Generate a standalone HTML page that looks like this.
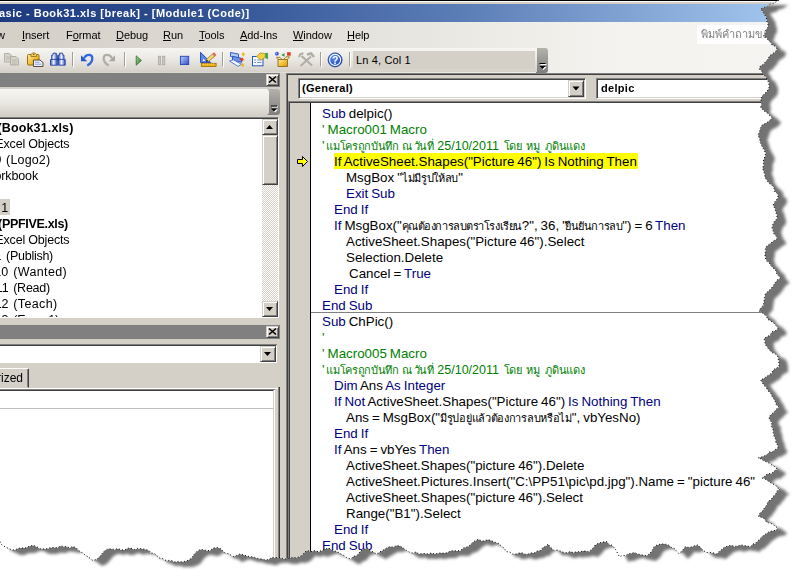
<!DOCTYPE html>
<html lang="th">
<head>
<meta charset="utf-8">
<title>Microsoft Visual Basic - Book31.xls [break] - [Module1 (Code)]</title>
<style>
html,body{margin:0;padding:0;background:#fff;}
body{width:793px;height:572px;overflow:hidden;position:relative;font-family:"Liberation Sans",sans-serif;}
#shadow{position:absolute;left:0;top:0;width:793px;height:572px;filter:drop-shadow(9px 5px 1.8px rgba(0,0,0,.55));}
#win{position:absolute;left:0;top:0;width:793px;height:572px;background:#fff;clip-path:url(#torn);overflow:hidden;}
#win div,#win span,#win svg{position:absolute;box-sizing:border-box;white-space:pre;}
#win span.i{position:static;}
.face{background:#d4d0c8;}
/* classic 3D button */
.btn{background:#d4d0c8;border:1px solid;border-color:#d4d0c8 #404040 #404040 #d4d0c8;box-shadow:inset 1px 1px 0 #fff,inset -1px -1px 0 #808080;}
.dither{background-color:#fff;background-image:conic-gradient(#fff 25%,#d4d0c8 0 50%,#fff 0 75%,#d4d0c8 0);background-size:2px 2px;}
/* title */
#title{left:0;top:4px;width:793px;height:18px;background:linear-gradient(to right,#1e3a80 0,#2a4a8e 160px,#5d7fb8 470px,#a3c6ee 780px);}
#title span{left:-1px;top:0;line-height:18px;color:#fff;font-weight:bold;font-size:11px;letter-spacing:.5px;}
/* menu */
.hgrad{background:linear-gradient(to right,#d4d0c8 0,#dedbd4 250px,#f3f2ee 600px,#f5f4f2 793px);}
#menu{left:0;top:22px;width:793px;height:26px;}
#menu span{top:0;line-height:26px;font-size:11px;color:#000;letter-spacing:-.05px;}
#menu u{text-decoration:underline;text-underline-offset:1px;}
#ask{left:697px;top:3px;width:100px;height:19px;background:#fff;}
#ask span{left:4px;top:0;line-height:19px;font-size:11px;color:#808080;}
/* toolbar */
#tb{left:0;top:48px;width:536.5px;height:24px;background:linear-gradient(to bottom,#f7f6f3 0,#e9e7e1 50%,#d5d1c9 100%);}
#tbrest{left:0;top:48px;width:793px;height:25px;}
.grip{background:linear-gradient(to bottom,#b4b2ac 0,#7e7e7e 100%);border-radius:0 3px 3px 0;}
#lncol{left:353px;top:3px;width:182px;height:18px;background:#d4d0c8;}
#lncol span{left:3px;top:0;line-height:18px;font-size:11px;letter-spacing:.15px;}
/* code */
.cl{left:322px;height:16px;line-height:16px;font-size:13.33px;color:#000;word-spacing:-.7px;}
.k{color:#000080;} .c{color:#008000;}
.tr{font-size:11px;letter-spacing:-.3px;}
.dg{font-size:12.5px;}
#L2 .c>:nth-child(2),#L16 .c>:nth-child(2){margin-left:-.9px;}
#L2 .c>:nth-child(3),#L16 .c>:nth-child(3){margin-left:-2.6px;}
#L2 .c>:nth-child(4),#L16 .c>:nth-child(4){margin-left:-.8px;}
#L2 .c>:nth-child(5),#L16 .c>:nth-child(5){margin-left:.4px;}
#L2 .c>:nth-child(7),#L16 .c>:nth-child(7){margin-left:1.5px;}
#L2,#L16{word-spacing:.6px;}
#L7 .tr{letter-spacing:-.45px;}
#L7 .tr~.tr{margin-left:-1.6px;}
#L7 .k:last-child{margin-left:-.5px;}
#L2>span:first-child,#L16>span:first-child{word-spacing:-2.1px;}
.tree{left:0;height:16px;line-height:16px;font-size:12.5px;color:#000;}
.b{font-weight:bold;}
.cb{font-size:11px;font-weight:bold;letter-spacing:.3px;line-height:18px;}
</style>
</head>
<body>
<svg width="0" height="0" style="position:absolute"><defs><clipPath id="torn"><path d="M-20 0 L779 0 L779.0 0.0 L776.1 1.8 L773.2 3.7 L769.6 4.2 L767.1 6.8 L763.5 7.4 L760.5 9.0 L762.5 11.3 L764.0 14.0 L766.2 17.0 L766.7 20.7 L768.0 24.0 L767.7 27.4 L765.6 30.1 L765.1 33.4 L763.0 36.0 L766.1 37.5 L768.1 40.2 L770.5 42.5 L772.2 45.2 L775.4 46.2 L777.0 49.0 L775.2 51.9 L772.3 53.8 L769.5 55.8 L768.0 59.0 L765.6 61.4 L763.7 64.2 L760.5 65.8 L759.0 69.0 L761.8 70.9 L762.4 74.5 L765.4 76.2 L767.0 79.0 L768.8 83.1 L769.0 87.5 L767.3 90.9 L764.7 93.4 L762.0 96.0 L760.8 99.7 L761.7 103.8 L760.5 107.5 L762.7 109.6 L764.9 111.7 L767.6 113.3 L769.6 115.6 L772.0 117.5 L770.1 120.1 L767.6 122.0 L764.9 123.6 L762.0 125.0 L760.3 128.2 L759.5 131.7 L758.0 135.0 L759.6 138.9 L760.5 143.0 L762.0 146.4 L763.9 149.6 L765.5 153.0 L765.3 156.1 L763.7 158.9 L763.3 161.9 L763.7 165.1 L762.5 168.0 L763.5 171.2 L764.7 174.3 L765.1 177.7 L767.0 180.5 L769.0 183.3 L772.0 185.2 L774.0 188.0 L774.4 191.4 L777.4 193.7 L778.0 197.0 L776.5 199.9 L774.2 202.4 L773.0 205.5 L775.0 208.5 L775.7 212.2 L777.0 215.5 L776.7 219.0 L774.2 221.6 L772.7 224.7 L772.0 228.0 L773.1 230.8 L773.7 233.8 L776.1 236.1 L777.0 239.0 L773.9 240.6 L771.1 242.8 L768.3 244.9 L765.5 247.0 L765.6 250.7 L764.8 254.3 L765.5 258.0 L766.6 261.1 L769.3 263.0 L770.8 265.7 L773.0 268.0 L775.6 269.9 L776.4 273.3 L778.4 275.7 L780.5 278.0 L777.2 279.9 L775.0 282.8 L773.0 286.0 L770.8 288.8 L768.2 291.2 L765.5 293.5 L764.4 297.7 L764.0 302.0 L763.3 305.5 L760.7 308.0 L759.0 311.0 L761.8 312.4 L764.2 314.4 L766.5 316.3 L767.8 319.4 L770.5 321.0 L773.6 322.9 L775.9 325.6 L778.0 328.5 L775.3 330.7 L771.9 331.8 L770.1 335.3 L766.9 336.6 L764.0 338.5 L764.9 341.4 L765.2 344.4 L767.0 347.0 L769.3 350.0 L772.0 352.6 L775.6 354.1 L778.0 357.0 L778.5 360.3 L779.0 363.6 L779.0 367.0 L775.9 368.2 L773.1 369.9 L771.5 373.2 L768.8 375.0 L766.1 376.8 L763.5 378.6 L760.5 380.0 L762.4 382.7 L764.1 385.6 L766.6 388.0 L768.0 391.0 L770.7 393.0 L771.8 396.2 L773.7 398.8 L775.2 401.7 L776.3 404.9 L779.0 407.0 L776.2 409.2 L774.0 412.0 L771.3 414.3 L769.0 417.0 L769.6 420.1 L771.9 422.7 L771.2 426.3 L773.0 429.0 L773.2 432.5 L773.9 435.9 L775.5 439.0 L775.7 442.2 L777.4 444.9 L778.0 448.0 L775.2 449.6 L772.7 451.6 L769.3 452.0 L767.0 454.6 L764.1 456.0 L761.1 457.1 L758.0 458.0 L761.1 458.9 L763.6 460.8 L766.6 461.9 L769.4 463.3 L772.0 465.2 L774.7 466.7 L777.0 469.0 L774.2 471.1 L771.5 473.5 L767.6 473.7 L764.9 476.0 L762.0 478.0 L765.0 478.9 L767.6 480.7 L770.1 482.4 L772.7 484.0 L775.6 485.1 L777.5 488.1 L780.5 489.0 L777.2 490.7 L775.6 494.1 L773.0 496.5 L771.1 499.6 L768.0 501.5 L766.8 505.0 L764.5 507.7 L762.7 510.8 L759.8 513.1 L758.5 516.5 L761.7 517.5 L764.6 518.9 L766.4 522.3 L769.6 523.1 L772.8 524.0 L775.2 526.4 L778.0 528.0 L775.8 530.3 L772.6 530.8 L769.5 531.4 L767.0 533.0 L764.5 534.8 L762.0 536.6 L760.1 539.0 L757.6 540.9 L755.6 543.2 L752.5 544.2 L750.6 546.7 L747.3 546.0 L744.0 545.4 L740.8 544.9 L737.6 546.0 L734.4 546.4 L731.2 545.2 L728.0 546.0 L724.5 547.1 L721.9 549.4 L719.1 551.4 L716.6 554.0 L713.3 552.8 L709.9 552.5 L706.5 552.5 L703.2 550.5 L700.7 547.5 L697.7 545.0 L694.6 545.7 L691.5 546.9 L688.3 547.3 L685.0 546.7 L683.3 549.3 L681.2 551.6 L678.7 553.5 L676.5 551.1 L674.4 548.5 L671.1 547.2 L668.7 545.0 L664.8 544.0 L660.9 543.9 L657.0 545.0 L653.8 546.9 L652.2 550.5 L649.9 553.3 L647.0 555.5 L643.8 555.3 L640.6 554.6 L637.5 553.9 L634.6 552.5 L631.6 553.2 L628.4 553.7 L625.8 555.5 L622.5 555.4 L619.5 556.7 L617.8 553.8 L616.4 550.7 L614.4 548.0 L612.4 545.4 L608.9 544.4 L607.0 541.6 L602.9 542.0 L599.0 543.0 L595.4 544.8 L593.0 548.0 L589.0 551.7 L585.9 551.1 L582.8 551.1 L579.6 551.7 L576.5 551.7 L573.4 552.6 L570.2 551.5 L567.1 552.7 L564.0 552.5 L560.8 551.2 L557.5 550.1 L554.0 550.4 L550.8 547.4 L548.0 544.0 L545.8 546.3 L542.7 547.5 L541.0 550.4 L537.5 550.8 L534.5 552.8 L531.0 553.0 L528.1 554.0 L525.1 554.2 L521.9 552.7 L519.0 553.1 L516.0 554.0 L512.5 554.0 L509.5 551.8 L506.0 551.7 L504.1 548.1 L500.9 545.7 L498.0 543.0 L494.6 542.2 L491.4 540.6 L488.0 539.6 L485.0 540.6 L481.9 541.1 L478.7 539.2 L475.7 540.4 L472.9 542.2 L470.5 544.6 L468.0 546.7 L463.8 547.7 L460.5 550.4 L457.1 551.0 L453.6 550.5 L450.2 551.0 L446.9 552.8 L443.5 553.1 L440.0 553.0 L437.0 553.6 L434.0 553.8 L431.0 553.1 L428.0 553.9 L425.0 553.5 L422.0 553.5 L418.9 553.9 L416.1 552.0 L413.0 553.0 L410.0 552.5 L406.6 550.4 L403.4 548.0 L400.0 546.0 L396.5 545.6 L393.3 547.2 L389.8 546.6 L386.6 548.0 L383.2 550.0 L379.8 551.9 L376.5 554.0 L373.6 552.0 L370.0 550.9 L367.7 548.0 L364.4 549.3 L361.0 550.4 L359.0 553.1 L356.7 555.5 L353.1 556.4 L351.0 559.0 L347.3 558.0 L344.3 555.7 L341.0 554.0 L338.1 552.1 L334.9 550.9 L331.5 549.8 L328.6 548.0 L325.2 549.2 L321.8 550.4 L318.5 551.7 L314.7 550.6 L310.7 551.7 L307.0 550.4 L304.4 552.4 L302.4 555.0 L299.6 556.7 L296.2 557.8 L292.6 557.3 L289.2 558.4 L285.7 559.0 L282.4 558.4 L279.1 557.4 L275.6 557.5 L272.0 557.5 L269.0 559.3 L265.6 560.0 L262.5 559.1 L259.4 558.7 L256.2 558.0 L253.2 556.9 L250.0 556.7 L246.6 555.9 L243.4 554.8 L240.0 554.0 L236.4 555.4 L232.8 556.7 L229.3 554.0 L225.0 553.0 L222.8 550.8 L220.6 548.6 L217.6 547.4 L213.4 548.0 L210.0 550.4 L206.6 550.6 L203.3 549.7 L200.0 549.5 L196.5 551.7 L193.9 554.6 L191.7 558.0 L188.6 560.0 L185.3 561.3 L181.6 561.8 L178.2 561.5 L174.7 561.9 L171.5 560.5 L168.3 560.4 L165.1 560.2 L162.2 558.3 L159.0 558.0 L156.9 555.6 L154.5 553.5 L151.0 552.9 L149.0 550.4 L145.2 549.3 L141.4 548.7 L137.5 548.4 L134.3 549.4 L130.8 548.1 L127.5 548.2 L124.3 550.1 L121.0 549.7 L118.0 548.5 L114.7 549.4 L111.6 549.0 L108.5 548.7 L104.8 550.6 L102.1 553.5 L99.6 556.7 L96.7 559.2 L93.0 560.5 L90.4 558.7 L88.0 556.7 L85.3 555.2 L83.0 553.0 L80.2 551.7 L77.9 549.6 L75.7 547.4 L72.7 546.6 L69.5 547.9 L66.6 546.4 L63.5 546.4 L60.5 546.0 L57.6 547.6 L54.4 547.6 L51.1 547.5 L48.1 548.4 L45.0 549.0 L40.5 548.8 L36.5 546.7 L33.4 545.3 L30.0 546.0 L25.0 548.0 L21.5 548.0 L18.1 548.3 L15.0 550.0 L11.4 549.7 L8.2 548.3 L5.0 546.7 L1.8 544.9 L0.0 541.6 L-20 537 Z"/></clipPath></defs></svg>
<div id="shadow">
<div id="win">
  <!-- window top border -->
  <div style="left:0;top:0;width:793px;height:1px;background:#000"></div>
  <div style="left:0;top:1px;width:793px;height:1px;background:#fff"></div>
  <div class="face" style="left:0;top:2px;width:793px;height:2px"></div>
  <div id="title"><span>asic - Book31.xls [break] - [Module1 (Code)]</span></div>

  <div id="menu" class="hgrad">
    <span style="left:-3px">w</span>
    <span style="left:22px"><u>I</u>nsert</span>
    <span style="left:66px">F<u>o</u>rmat</span>
    <span style="left:116px"><u>D</u>ebug</span>
    <span style="left:163px"><u>R</u>un</span>
    <span style="left:199px"><u>T</u>ools</span>
    <span style="left:240px"><u>A</u>dd-Ins</span>
    <span style="left:293px"><u>W</u>indow</span>
    <span style="left:347px"><u>H</u>elp</span>
    <div id="ask"><span>พิมพ์คำถามขอ</span></div>
  </div>

  <div id="tbrest" class="hgrad"></div>
  <div class="grip" style="left:536px;top:48px;width:12px;height:25px"></div>
  <div id="tb">
    <div id="lncol"><span>Ln 4, Col 1</span></div>
  </div>
  <!-- toolbar icons -->
  <svg style="left:0;top:48px" width="560" height="25" viewBox="0 48 560 25">
    <defs>
      <linearGradient id="gGold" x1="0" y1="0" x2="1" y2="1"><stop offset="0" stop-color="#fdeaa4"/><stop offset=".5" stop-color="#f3c23c"/><stop offset="1" stop-color="#d8960c"/></linearGradient>
      <linearGradient id="gBlue" x1="0" y1="0" x2="1" y2="1"><stop offset="0" stop-color="#c0d0fa"/><stop offset="1" stop-color="#2c4cc8"/></linearGradient>
      <linearGradient id="gBino" x1="0" y1="0" x2="1" y2="0"><stop offset="0" stop-color="#3858c0"/><stop offset=".45" stop-color="#f0f4ff"/><stop offset="1" stop-color="#2c4cb8"/></linearGradient>
      <linearGradient id="gRun" x1="0" y1="0" x2="1" y2="1"><stop offset="0" stop-color="#a0dc90"/><stop offset="1" stop-color="#2c7c2c"/></linearGradient>
      <radialGradient id="gHelp" cx=".4" cy=".35" r=".7"><stop offset="0" stop-color="#5a8cf0"/><stop offset="1" stop-color="#1440b0"/></radialGradient>
    </defs>
    <!-- copy (disabled) -->
    <path d="M4.500 53.500h5l2.500 2.500v6h-7.500z" fill="#d6d3cb" stroke="#b4b1a8"/>
    <path d="M6 57h4.500M6 59h4.500" stroke="#bdbab1"/>
    <path d="M10.500 56.500h5.500l2.500 2.500v6h-8z" fill="#d6d3cb" stroke="#b0ada4"/>
    <path d="M12 60h5M12 62h5M12 64h5" stroke="#b6b3aa" stroke-width=".9"/>
    <!-- paste -->
    <rect x="27.500" y="54.500" width="11.500" height="10.500" rx="1" fill="url(#gGold)" stroke="#9a6e10"/>
    <path d="M31 56.500v-2l1.500-1.500h2.500l1.500 1.500v2z" fill="#f2d270" stroke="#8a6818" stroke-width=".8"/>
    <circle cx="33.700" cy="54.500" r=".7" fill="#6a5010"/>
    <path d="M33.500 60h6.500l3 2.500v4h-9.500z" fill="#eef2fb" stroke="#4a3a2a" stroke-width=".9"/>
    <path d="M35 62.200h4.500M35 64.200h6.500" stroke="#7c98d4" stroke-width=".9"/>
    <!-- find (binoculars) -->
    <path d="M53 53.200h3.300v2h1v10h-6.800v-5.500l1.200-1.200v-3.300h1.300z" fill="url(#gBino)" stroke="#2440a0" stroke-width=".9"/>
    <path d="M59.400 53.200h3.300v2h1.300v3.300l1.200 1.200v5.500h-6.800v-10h1z" fill="url(#gBino)" stroke="#2440a0" stroke-width=".9"/>
    <path d="M51 59.400h6.300M58.400 59.400h6.300" stroke="#2440a0" stroke-width=".9"/>
    <rect x="57.200" y="58" width="1.400" height="2.400" fill="#2440a0"/>
    <!-- separators -->
    <path d="M72.500 52v14.500M124.500 52v14.500M222.500 52v14.500M320.500 52v14.500M349.500 52v14.500" stroke="#a09d94"/>
    <path d="M73.500 53v14.500M125.500 53v14.500M223.500 53v14.500M321.500 53v14.500M350.500 53v14.500" stroke="#fff"/>
    <!-- undo -->
    <path d="M84.500 57.500c2-3.500 7.500-3.800 7.800 0.500c.2 3-1.800 5.500-4.300 7" fill="none" stroke="#2e68de" stroke-width="2.300" stroke-linecap="round"/>
    <path d="M81 55.300v6h6.300z" fill="#2558cc"/>
    <!-- redo (disabled) -->
    <path d="M111.500 57.500c-2-3.500-7.500-3.800-7.800 0.500c-.2 3 1.800 5.500 4.300 7" fill="none" stroke="#b0ada5" stroke-width="2.300" stroke-linecap="round"/>
    <path d="M115 55.300v6h-6.300z" fill="#aaa79f"/>
    <!-- run -->
    <path d="M136.200 55.800v9.400l5.200-4.700z" fill="url(#gRun)" stroke="#2a5a2a" stroke-width=".7"/>
    <!-- pause -->
    <rect x="158.300" y="56.200" width="2.400" height="8.600" fill="#cac7bf" stroke="#a6a39b" stroke-width=".7"/>
    <rect x="162.500" y="56.200" width="2.400" height="8.600" fill="#cac7bf" stroke="#a6a39b" stroke-width=".7"/>
    <!-- stop -->
    <rect x="180.400" y="56.300" width="8.300" height="8.300" fill="url(#gBlue)" stroke="#2444b8" stroke-width=".9"/>
    <!-- design mode -->
    <path d="M200.500 52.300v10.200h10.200z" fill="#5a86ec" stroke="#2040b0" stroke-width=".9"/>
    <path d="M203 58.400v2.500h2.500z" fill="#eef2fc"/>
    <path d="M207.300 60.500l7.200-6.200" stroke="#8a6a20" stroke-width="3.600"/>
    <path d="M207.300 60.500l6.500-5.600" stroke="#f6dc72" stroke-width="2.400"/>
    <path d="M213.300 55.300l2-1.700" stroke="#d86a6a" stroke-width="3.400"/>
    <path d="M205.800 62l.9-2.500l1.900 1.600z" fill="#3a2408"/>
    <rect x="201.300" y="63.300" width="14.800" height="3.200" fill="#f0b010" stroke="#9a6c04" stroke-width=".8"/>
    <path d="M203.500 63.500v1.500M205.500 63.500v1M207.500 63.500v1.500M209.500 63.500v1M211.500 63.500v1.500M213.500 63.500v1" stroke="#fbe6a0" stroke-width=".7"/>
    <!-- project explorer -->
    <path d="M230.500 52.500l8 1.500v4l-8-1.500z" fill="#b4caf6" stroke="#2450c0" stroke-width=".9"/>
    <path d="M232.500 56.300l9 2v4l-9-2z" fill="#6e96ea" stroke="#2450c0" stroke-width=".9"/>
    <path d="M229.500 61l4-1.200l8 4.500l-3.500 2z" fill="#f2f6fe" stroke="#4a70cc" stroke-width=".9"/>
    <path d="M243.300 52l1.700 2.300l-1.700 2.300l-1.700-2.300zM242.700 62.800l1.700 2.300l-1.700 2.300l-1.700-2.300z" fill="#f4b428"/>
    <path d="M239.500 59.500l3.500-2v4z" fill="#e43020"/>
    <path d="M242.500 58l2 1.500l-2 1.500z" fill="#f08020"/>
    <!-- properties -->
    <rect x="252.500" y="56.500" width="10.500" height="9.300" fill="#f6f9ff" stroke="#3058b8"/>
    <path d="M254 60h2M257 60h4.500M254 62.500h2M257 62.500h4.500" stroke="#7a98d8"/>
    <path d="M256.500 56.500l3.500-3.500l5.500 .5l-.5 4l-4 2.500z" fill="#f2d040" stroke="#a88a18" stroke-width=".7"/>
    <path d="M265.300 53.300l2.600-.6v6.500l-2.600-1.200z" fill="#38a048"/>
    <!-- object browser -->
    <path d="M278 59.500h9.500v7h-9.500z" fill="url(#gGold)" stroke="#8a6a1a" stroke-width=".9"/>
    <path d="M278 59.500l-1.500-2.200h3.500l2 2.200zM287.500 59.500l2-2.700h-3.500l-2.500 2.700z" fill="#fae8a0" stroke="#8a6a1a" stroke-width=".8"/>
    <circle cx="276.900" cy="53.700" r="1.900" fill="#3454d8"/>
    <circle cx="276.400" cy="53.200" r=".7" fill="#b0c0ff"/>
    <path d="M284.500 53v3.800l-3.200-1.900z" fill="#30a040"/>
    <rect x="287.100" y="52.200" width="3.600" height="3.500" fill="#e43824"/>
    <!-- toolbox (disabled) -->
    <path d="M301.500 56l10.500 9.500" stroke="#b0ada5" stroke-width="2.200"/>
    <path d="M311 56.500l-10.500 9.500" stroke="#b0ada5" stroke-width="2"/>
    <path d="M299.300 57.300a3.200 3.200 0 0 1 4.200-3.600" fill="none" stroke="#b0ada5" stroke-width="2"/>
    <path d="M307 54.500l4-1l3 3.500" fill="none" stroke="#b0ada5" stroke-width="2.600"/>
    <!-- help -->
    <circle cx="335.100" cy="59.900" r="7" fill="url(#gHelp)" stroke="#1a3ca0" stroke-width=".8"/>
    <circle cx="335.100" cy="59.900" r="5.500" fill="none" stroke="#fff" stroke-width="1.100"/>
    <text x="335.100" y="63.700" text-anchor="middle" font-family="Liberation Sans, sans-serif" font-weight="bold" font-size="10.500" fill="#fff">?</text>
    <!-- toolbar overflow glyph -->
    <path d="M540.500 64h6v1h-6z M540.500 67h6l-3 3z" fill="#fff"/>
    <path d="M539.500 63h6v1h-6z M539.500 66h6l-3 3z" fill="#000"/>

  </svg>

  <!-- ===== left: project explorer ===== -->
  <div class="face" style="left:0;top:73px;width:286px;height:499px"></div>
  <div style="left:0;top:73px;width:280px;height:14px;background:#808080"></div>
  <div class="btn" style="left:266px;top:74px;width:13px;height:12px"></div>
  <svg style="left:266px;top:74px" width="13" height="12"><path d="M3 2.5L10 8.5M10 2.5L3 8.5" stroke="#000" stroke-width="1.6" fill="none"/></svg>
  <div class="grip" style="left:266px;top:89px;width:14px;height:26px"></div>
  <div style="left:0;top:89px;width:269px;height:26px;border-radius:0 3px 3px 0;background:linear-gradient(to bottom,#f7f6f3 0,#e9e7e1 55%,#d4d0c8 100%)"></div>
  <svg style="left:270px;top:104px" width="9" height="9"><path d="M2 2.5h6v1h-6z M2 5.5h6l-3 3z" fill="#fff"/><path d="M1 1.5h6v1h-6z M1 4.5h6l-3 3z" fill="#000"/></svg>
  <!-- tree -->
  <div style="left:0;top:117px;width:279px;height:201px;background:#fff;border-top:1px solid #808080;border-right:1px solid #fff;border-bottom:1px solid #fff"></div>
  <div style="left:0;top:118px;width:278px;height:1px;background:#404040"></div>
  <div style="left:0;top:199px;width:10px;height:16px;background:#d4d0c8"></div>
  <div class="tree b" style="top:120px;left:-2.5px;letter-spacing:0.14px">(Book31.xls)</div>
  <div class="tree" style="top:136px;left:-4.66px;letter-spacing:-0.18px">Excel Objects</div>
  <div class="tree" style="top:152px;left:6.1px;letter-spacing:0.16px">(Logo2)</div>
  <div class="tree" style="top:152px;left:-5.4px">9</div>
  <div class="tree" style="top:168px;left:-5.64px;letter-spacing:-0.11px">orkbook</div>
  <div class="tree" style="top:200px;left:1.3px">1</div>
  <div class="tree b" style="top:216px;left:-1.95px;letter-spacing:-0.31px">(PPFIVE.xls)</div>
  <div class="tree" style="top:232px;left:-4.66px;letter-spacing:-0.18px">Excel Objects</div>
  <div class="tree" style="top:248px;left:6.1px;letter-spacing:-0.27px">(Publish)</div>
  <div class="tree" style="top:248px;left:-5.6px">1</div>
  <div class="tree" style="top:264px;left:-5.65px;letter-spacing:0px">10</div>
  <div class="tree" style="top:264px;left:13.2px;letter-spacing:0.37px">(Wanted)</div>
  <div class="tree" style="top:280px;left:-4.25px;letter-spacing:0px">11</div>
  <div class="tree" style="top:280px;left:13.2px;letter-spacing:-0.25px">(Read)</div>
  <div class="tree" style="top:296px;left:-5.35px;letter-spacing:0px">12</div>
  <div class="tree" style="top:296px;left:13.2px;letter-spacing:0.4px">(Teach)</div>
  <div class="tree" style="top:312px;left:-5.35px;letter-spacing:0px;height:5px;overflow:hidden">13</div>
  <div class="tree" style="top:312px;left:13.2px;letter-spacing:-0.19px;height:5px;overflow:hidden">(Exam1)</div>
  <!-- tree scrollbar -->
  <div class="dither" style="left:262px;top:119px;width:16px;height:198px"></div>
  <div class="btn" style="left:262px;top:119px;width:16px;height:16px"></div>
  <svg style="left:262px;top:119px" width="16" height="16"><path d="M4 10h7l-3.5-4z" fill="#000"/></svg>
  <div class="btn" style="left:262px;top:135px;width:16px;height:50px"></div>
  <div class="btn" style="left:262px;top:301px;width:16px;height:16px"></div>
  <svg style="left:262px;top:301px" width="16" height="16"><path d="M4 6h7l-3.5 4z" fill="#000"/></svg>

  <!-- properties -->
  <div style="left:0;top:325px;width:280px;height:14px;background:#808080"></div>
  <div class="btn" style="left:266px;top:326px;width:13px;height:12px"></div>
  <svg style="left:266px;top:326px" width="13" height="12"><path d="M3 2.5L10 8.5M10 2.5L3 8.5" stroke="#000" stroke-width="1.6" fill="none"/></svg>
  <div style="left:0;top:344px;width:277px;height:19px;background:#fff;border-top:2px solid #404040;border-bottom:1px solid #fff;border-right:1px solid #fff"></div>
  <div style="left:0;top:344px;width:277px;height:1px;background:#808080"></div>
  <div class="btn" style="left:260px;top:346px;width:16px;height:16px"></div>
  <svg style="left:260px;top:346px" width="16" height="16"><path d="M4 6h7l-3.5 4z" fill="#000"/></svg>
  <!-- tab -->
  <div style="left:-4px;top:368px;width:33px;height:20px;border:1px solid;border-color:#fff #404040 #d4d0c8 #fff;box-shadow:inset -1px 0 0 #808080;border-radius:2px 2px 0 0"></div>
  <span style="left:-3px;top:370px;font-size:12px;line-height:16px">rized</span>
  <div style="left:0;top:388px;width:279px;height:1px;background:#fff"></div>
  <div style="left:278px;top:387px;width:1px;height:185px;background:#808080"></div>
  <div style="left:279px;top:387px;width:1px;height:185px;background:#404040"></div>
  <div style="left:0;top:389px;width:275px;height:183px;background:#fff;border-top:2px solid #404040;border-right:2px solid #fff"></div>
  <div style="left:0;top:389px;width:275px;height:1px;background:#808080"></div>
  <div style="left:0;top:408px;width:273px;height:1px;background:#c0c0c0"></div>
  <div style="left:273px;top:391px;width:1px;height:181px;background:#d4d0c8"></div>

  <!-- splitter / code window frame -->
  <div style="left:286px;top:73px;width:1px;height:499px;background:#808080"></div>
  <div style="left:287px;top:73px;width:1px;height:499px;background:#404040"></div>
  <div class="face" style="left:288px;top:75px;width:505px;height:27px"></div>
  <div style="left:287px;top:73px;width:506px;height:1px;background:#808080"></div>
  <div style="left:288px;top:74px;width:505px;height:1px;background:#404040"></div>
  <!-- combos -->
  <div style="left:298px;top:78px;width:288px;height:21px;background:#fff;border:1px solid;border-color:#808080 #fff #fff #808080;box-shadow:inset 1px 1px 0 #404040,inset -1px -1px 0 #d4d0c8"></div>
  <span class="cb" style="left:302px;top:79px">(General)</span>
  <div class="btn" style="left:568px;top:80px;width:16px;height:17px"></div>
  <svg style="left:568px;top:80px" width="16" height="17"><path d="M4.5 6.5h7l-3.5 4z" fill="#000"/></svg>
  <div style="left:596px;top:78px;width:220px;height:21px;background:#fff;border:1px solid;border-color:#808080 #fff #fff #808080;box-shadow:inset 1px 1px 0 #404040,inset -1px -1px 0 #d4d0c8"></div>
  <span class="cb" style="left:601px;top:79px">delpic</span>

  <!-- code area -->
  <div style="left:288px;top:101px;width:505px;height:471px;background:#808080"></div>
  <div style="left:289px;top:102px;width:504px;height:470px;background:#404040"></div>
  <div class="face" style="left:290px;top:103px;width:20px;height:469px"></div>
  <div style="left:310px;top:103px;width:1px;height:469px;background:#000"></div>
  <div style="left:311px;top:103px;width:482px;height:469px;background:#fff"></div>
  <div style="left:311px;top:312px;width:482px;height:1px;background:#808080"></div>
  <div style="left:334px;top:153px;width:304px;height:16px;background:#ffff00"></div>
  <!-- execution arrow -->
  <svg style="left:296px;top:155px" width="14" height="13" viewBox="0 0 14 13"><path d="M1.5 4.5H6.5V1.5L11.5 6.5L6.5 11.5V8.5H1.5Z" fill="#ffff00" stroke="#000" stroke-width="1" stroke-linejoin="miter"/></svg>

  <div class="cl" id="L0" style="top:106px;left:322px"><span class="i k">Sub</span> delpic()</div>
  <div class="cl" id="L1" style="top:122px;left:322px"><span class="i c">' Macro001 Macro</span></div>
  <div class="cl" id="L2" style="top:138px;left:322px"><span class="i c">' </span><span class="i c"><span class="i tr">แมโครถูกบันทึก</span> <span class="i tr">ณ</span> <span class="i tr">วันที่</span> <span class="i dg">25/10/2011</span> <span class="i tr">โดย</span> <span class="i tr">หมู</span> <span class="i tr">ภูดินแดง</span></span></div>
  <div class="cl" id="L3" style="top:154px;left:334px">If ActiveSheet.Shapes("Picture 46") Is Nothing Then</div>
  <div class="cl" id="L4" style="top:170px;left:346px">MsgBox "<span class="i tr">ไม่มีรูปให้ลบ</span>"</div>
  <div class="cl" id="L5" style="top:186px;left:346px"><span class="i k">Exit Sub</span></div>
  <div class="cl" id="L6" style="top:202px;left:334px"><span class="i k">End If</span></div>
  <div class="cl" id="L7" style="top:218px;left:334px"><span class="i k">If</span> MsgBox("<span class="i tr">คุณต้องการลบตราโรงเรียน</span>?", 36, "<span class="i tr">ยืนยันการลบ</span>") = 6 <span class="i k">Then</span></div>
  <div class="cl" id="L8" style="top:234px;left:346px">ActiveSheet.Shapes("Picture 46").Select</div>
  <div class="cl" id="L9" style="top:250px;left:346px">Selection.Delete</div>
  <div class="cl" id="L10" style="top:266px;left:349px">Cancel = <span class="i k">True</span></div>
  <div class="cl" id="L11" style="top:282px;left:334px"><span class="i k">End If</span></div>
  <div class="cl" id="L12" style="top:298px;left:322px"><span class="i k">End Sub</span></div>
  <div class="cl" id="L13" style="top:314px;left:322px"><span class="i k">Sub</span> ChPic()</div>
  <div class="cl" id="L14" style="top:330px;left:322px"><span class="i c">'</span></div>
  <div class="cl" id="L15" style="top:346px;left:322px"><span class="i c">' Macro005 Macro</span></div>
  <div class="cl" id="L16" style="top:362px;left:322px"><span class="i c">' </span><span class="i c"><span class="i tr">แมโครถูกบันทึก</span> <span class="i tr">ณ</span> <span class="i tr">วันที่</span> <span class="i dg">25/10/2011</span> <span class="i tr">โดย</span> <span class="i tr">หมู</span> <span class="i tr">ภูดินแดง</span></span></div>
  <div class="cl" id="L17" style="top:378px;left:334px"><span class="i k">Dim</span> Ans <span class="i k">As Integer</span></div>
  <div class="cl" id="L18" style="top:394px;left:334px"><span class="i k">If Not</span> ActiveSheet.Shapes("Picture 46") <span class="i k">Is Nothing Then</span></div>
  <div class="cl" id="L19" style="top:410px;left:346px">Ans = MsgBox("<span class="i tr">มีรูปอยู่แล้วต้องการลบหรือไม่</span>", vbYesNo)</div>
  <div class="cl" id="L20" style="top:426px;left:334px"><span class="i k">End If</span></div>
  <div class="cl" id="L21" style="top:442px;left:334px"><span class="i k">If</span> Ans = vbYes <span class="i k">Then</span></div>
  <div class="cl" id="L22" style="top:458px;left:346px">ActiveSheet.Shapes("picture 46").Delete</div>
  <div class="cl" id="L23" style="top:474px;left:346px">ActiveSheet.Pictures.Insert("C:\PP51\pic\pd.jpg").Name = "picture 46"</div>
  <div class="cl" id="L24" style="top:490px;left:346px">ActiveSheet.Shapes("picture 46").Select</div>
  <div class="cl" id="L25" style="top:506px;left:346px">Range("B1").Select</div>
  <div class="cl" id="L26" style="top:522px;left:334px"><span class="i k">End If</span></div>
  <div class="cl" id="L27" style="top:538px;left:322px"><span class="i k">End Sub</span></div>
</div>
</div>
<svg width="793" height="572" style="position:absolute;left:0;top:0"><path d="M779.0 0.0 L776.1 1.8 L773.2 3.7 L769.6 4.2 L767.1 6.8 L763.5 7.4 L760.5 9.0 L762.5 11.3 L764.0 14.0 L766.2 17.0 L766.7 20.7 L768.0 24.0 L767.7 27.4 L765.6 30.1 L765.1 33.4 L763.0 36.0 L766.1 37.5 L768.1 40.2 L770.5 42.5 L772.2 45.2 L775.4 46.2 L777.0 49.0 L775.2 51.9 L772.3 53.8 L769.5 55.8 L768.0 59.0 L765.6 61.4 L763.7 64.2 L760.5 65.8 L759.0 69.0 L761.8 70.9 L762.4 74.5 L765.4 76.2 L767.0 79.0 L768.8 83.1 L769.0 87.5 L767.3 90.9 L764.7 93.4 L762.0 96.0 L760.8 99.7 L761.7 103.8 L760.5 107.5 L762.7 109.6 L764.9 111.7 L767.6 113.3 L769.6 115.6 L772.0 117.5 L770.1 120.1 L767.6 122.0 L764.9 123.6 L762.0 125.0 L760.3 128.2 L759.5 131.7 L758.0 135.0 L759.6 138.9 L760.5 143.0 L762.0 146.4 L763.9 149.6 L765.5 153.0 L765.3 156.1 L763.7 158.9 L763.3 161.9 L763.7 165.1 L762.5 168.0 L763.5 171.2 L764.7 174.3 L765.1 177.7 L767.0 180.5 L769.0 183.3 L772.0 185.2 L774.0 188.0 L774.4 191.4 L777.4 193.7 L778.0 197.0 L776.5 199.9 L774.2 202.4 L773.0 205.5 L775.0 208.5 L775.7 212.2 L777.0 215.5 L776.7 219.0 L774.2 221.6 L772.7 224.7 L772.0 228.0 L773.1 230.8 L773.7 233.8 L776.1 236.1 L777.0 239.0 L773.9 240.6 L771.1 242.8 L768.3 244.9 L765.5 247.0 L765.6 250.7 L764.8 254.3 L765.5 258.0 L766.6 261.1 L769.3 263.0 L770.8 265.7 L773.0 268.0 L775.6 269.9 L776.4 273.3 L778.4 275.7 L780.5 278.0 L777.2 279.9 L775.0 282.8 L773.0 286.0 L770.8 288.8 L768.2 291.2 L765.5 293.5 L764.4 297.7 L764.0 302.0 L763.3 305.5 L760.7 308.0 L759.0 311.0 L761.8 312.4 L764.2 314.4 L766.5 316.3 L767.8 319.4 L770.5 321.0 L773.6 322.9 L775.9 325.6 L778.0 328.5 L775.3 330.7 L771.9 331.8 L770.1 335.3 L766.9 336.6 L764.0 338.5 L764.9 341.4 L765.2 344.4 L767.0 347.0 L769.3 350.0 L772.0 352.6 L775.6 354.1 L778.0 357.0 L778.5 360.3 L779.0 363.6 L779.0 367.0 L775.9 368.2 L773.1 369.9 L771.5 373.2 L768.8 375.0 L766.1 376.8 L763.5 378.6 L760.5 380.0 L762.4 382.7 L764.1 385.6 L766.6 388.0 L768.0 391.0 L770.7 393.0 L771.8 396.2 L773.7 398.8 L775.2 401.7 L776.3 404.9 L779.0 407.0 L776.2 409.2 L774.0 412.0 L771.3 414.3 L769.0 417.0 L769.6 420.1 L771.9 422.7 L771.2 426.3 L773.0 429.0 L773.2 432.5 L773.9 435.9 L775.5 439.0 L775.7 442.2 L777.4 444.9 L778.0 448.0 L775.2 449.6 L772.7 451.6 L769.3 452.0 L767.0 454.6 L764.1 456.0 L761.1 457.1 L758.0 458.0 L761.1 458.9 L763.6 460.8 L766.6 461.9 L769.4 463.3 L772.0 465.2 L774.7 466.7 L777.0 469.0 L774.2 471.1 L771.5 473.5 L767.6 473.7 L764.9 476.0 L762.0 478.0 L765.0 478.9 L767.6 480.7 L770.1 482.4 L772.7 484.0 L775.6 485.1 L777.5 488.1 L780.5 489.0 L777.2 490.7 L775.6 494.1 L773.0 496.5 L771.1 499.6 L768.0 501.5 L766.8 505.0 L764.5 507.7 L762.7 510.8 L759.8 513.1 L758.5 516.5 L761.7 517.5 L764.6 518.9 L766.4 522.3 L769.6 523.1 L772.8 524.0 L775.2 526.4 L778.0 528.0 L775.8 530.3 L772.6 530.8 L769.5 531.4 L767.0 533.0 L764.5 534.8 L762.0 536.6 L760.1 539.0 L757.6 540.9 L755.6 543.2 L752.5 544.2 L750.6 546.7 L747.3 546.0 L744.0 545.4 L740.8 544.9 L737.6 546.0 L734.4 546.4 L731.2 545.2 L728.0 546.0 L724.5 547.1 L721.9 549.4 L719.1 551.4 L716.6 554.0 L713.3 552.8 L709.9 552.5 L706.5 552.5 L703.2 550.5 L700.7 547.5 L697.7 545.0 L694.6 545.7 L691.5 546.9 L688.3 547.3 L685.0 546.7 L683.3 549.3 L681.2 551.6 L678.7 553.5 L676.5 551.1 L674.4 548.5 L671.1 547.2 L668.7 545.0 L664.8 544.0 L660.9 543.9 L657.0 545.0 L653.8 546.9 L652.2 550.5 L649.9 553.3 L647.0 555.5 L643.8 555.3 L640.6 554.6 L637.5 553.9 L634.6 552.5 L631.6 553.2 L628.4 553.7 L625.8 555.5 L622.5 555.4 L619.5 556.7 L617.8 553.8 L616.4 550.7 L614.4 548.0 L612.4 545.4 L608.9 544.4 L607.0 541.6 L602.9 542.0 L599.0 543.0 L595.4 544.8 L593.0 548.0 L589.0 551.7 L585.9 551.1 L582.8 551.1 L579.6 551.7 L576.5 551.7 L573.4 552.6 L570.2 551.5 L567.1 552.7 L564.0 552.5 L560.8 551.2 L557.5 550.1 L554.0 550.4 L550.8 547.4 L548.0 544.0 L545.8 546.3 L542.7 547.5 L541.0 550.4 L537.5 550.8 L534.5 552.8 L531.0 553.0 L528.1 554.0 L525.1 554.2 L521.9 552.7 L519.0 553.1 L516.0 554.0 L512.5 554.0 L509.5 551.8 L506.0 551.7 L504.1 548.1 L500.9 545.7 L498.0 543.0 L494.6 542.2 L491.4 540.6 L488.0 539.6 L485.0 540.6 L481.9 541.1 L478.7 539.2 L475.7 540.4 L472.9 542.2 L470.5 544.6 L468.0 546.7 L463.8 547.7 L460.5 550.4 L457.1 551.0 L453.6 550.5 L450.2 551.0 L446.9 552.8 L443.5 553.1 L440.0 553.0 L437.0 553.6 L434.0 553.8 L431.0 553.1 L428.0 553.9 L425.0 553.5 L422.0 553.5 L418.9 553.9 L416.1 552.0 L413.0 553.0 L410.0 552.5 L406.6 550.4 L403.4 548.0 L400.0 546.0 L396.5 545.6 L393.3 547.2 L389.8 546.6 L386.6 548.0 L383.2 550.0 L379.8 551.9 L376.5 554.0 L373.6 552.0 L370.0 550.9 L367.7 548.0 L364.4 549.3 L361.0 550.4 L359.0 553.1 L356.7 555.5 L353.1 556.4 L351.0 559.0 L347.3 558.0 L344.3 555.7 L341.0 554.0 L338.1 552.1 L334.9 550.9 L331.5 549.8 L328.6 548.0 L325.2 549.2 L321.8 550.4 L318.5 551.7 L314.7 550.6 L310.7 551.7 L307.0 550.4 L304.4 552.4 L302.4 555.0 L299.6 556.7 L296.2 557.8 L292.6 557.3 L289.2 558.4 L285.7 559.0 L282.4 558.4 L279.1 557.4 L275.6 557.5 L272.0 557.5 L269.0 559.3 L265.6 560.0 L262.5 559.1 L259.4 558.7 L256.2 558.0 L253.2 556.9 L250.0 556.7 L246.6 555.9 L243.4 554.8 L240.0 554.0 L236.4 555.4 L232.8 556.7 L229.3 554.0 L225.0 553.0 L222.8 550.8 L220.6 548.6 L217.6 547.4 L213.4 548.0 L210.0 550.4 L206.6 550.6 L203.3 549.7 L200.0 549.5 L196.5 551.7 L193.9 554.6 L191.7 558.0 L188.6 560.0 L185.3 561.3 L181.6 561.8 L178.2 561.5 L174.7 561.9 L171.5 560.5 L168.3 560.4 L165.1 560.2 L162.2 558.3 L159.0 558.0 L156.9 555.6 L154.5 553.5 L151.0 552.9 L149.0 550.4 L145.2 549.3 L141.4 548.7 L137.5 548.4 L134.3 549.4 L130.8 548.1 L127.5 548.2 L124.3 550.1 L121.0 549.7 L118.0 548.5 L114.7 549.4 L111.6 549.0 L108.5 548.7 L104.8 550.6 L102.1 553.5 L99.6 556.7 L96.7 559.2 L93.0 560.5 L90.4 558.7 L88.0 556.7 L85.3 555.2 L83.0 553.0 L80.2 551.7 L77.9 549.6 L75.7 547.4 L72.7 546.6 L69.5 547.9 L66.6 546.4 L63.5 546.4 L60.5 546.0 L57.6 547.6 L54.4 547.6 L51.1 547.5 L48.1 548.4 L45.0 549.0 L40.5 548.8 L36.5 546.7 L33.4 545.3 L30.0 546.0 L25.0 548.0 L21.5 548.0 L18.1 548.3 L15.0 550.0 L11.4 549.7 L8.2 548.3 L5.0 546.7 L1.8 544.9 L0.0 541.6" fill="none" stroke="#000" stroke-width="1" stroke-dasharray="1 2.2"/></svg>
</body>
</html>
